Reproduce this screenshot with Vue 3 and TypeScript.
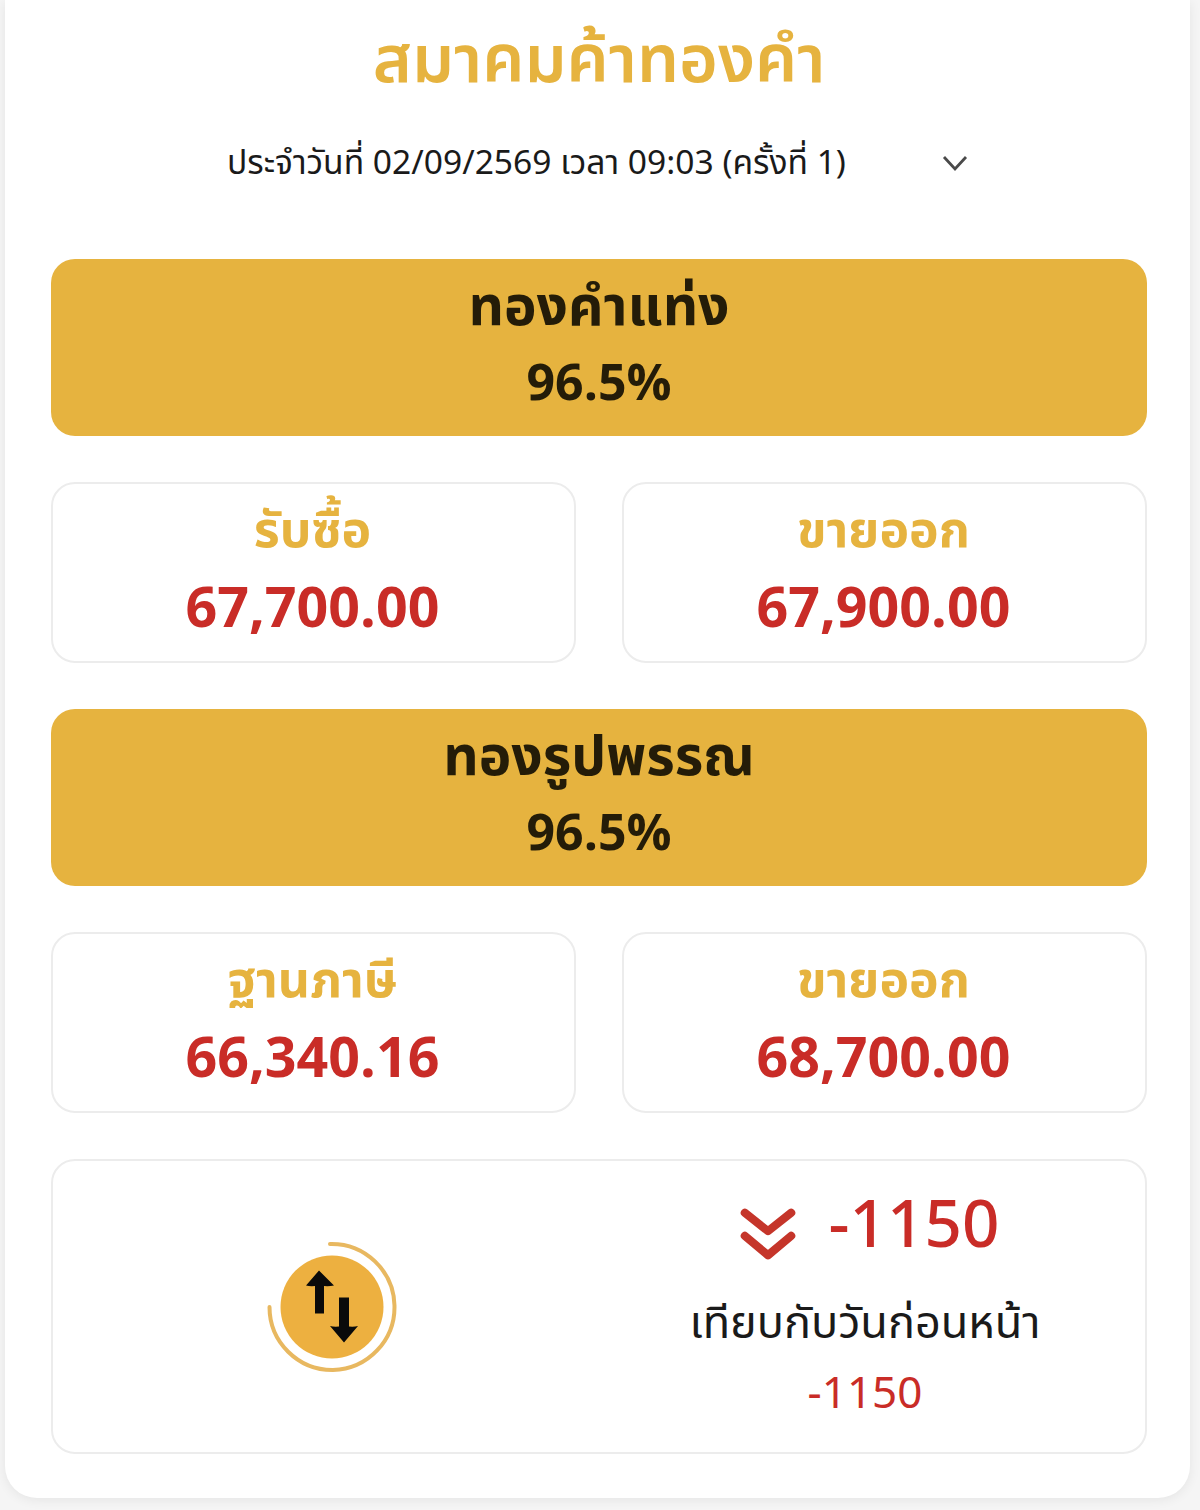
<script setup lang="ts">
interface Price {
  label: string
  value: string
}

interface Section {
  title: string
  purity: string
  prices: Price[]
}

const sections: Section[] = [
  {
    title: 'ทองคำแท่ง',
    purity: '96.5%',
    prices: [
      { label: 'รับซื้อ', value: '67,700.00' },
      { label: 'ขายออก', value: '67,900.00' },
    ],
  },
  {
    title: 'ทองรูปพรรณ',
    purity: '96.5%',
    prices: [
      { label: 'ฐานภาษี', value: '66,340.16' },
      { label: 'ขายออก', value: '68,700.00' },
    ],
  },
]
</script>

<template>
  <div class="page">
    <main class="panel">
      <h1 class="title">สมาคมค้าทองคำ</h1>
      <div class="date-row">
        <span class="date-text">ประจำวันที่ 02/09/2569 เวลา 09:03 (ครั้งที่ 1)</span>
        <svg class="date-chevron" viewBox="0 0 28 18" aria-hidden="true">
          <path d="M3 3 L14 15 L25 3" fill="none" stroke="#4a4a4a" stroke-width="2.8" />
        </svg>
      </div>

      <section v-for="s in sections" :key="s.title" class="section">
        <div class="banner">
          <div class="banner__title">{{ s.title }}</div>
          <div class="banner__purity">{{ s.purity }}</div>
        </div>
        <div class="prices">
          <div v-for="p in s.prices" :key="p.label" class="price">
            <div class="price__label">{{ p.label }}</div>
            <div class="price__value">{{ p.value }}</div>
          </div>
        </div>
      </section>

      <div class="change">
        <div class="change__icon">
          <svg viewBox="0 0 132 132" width="132" height="132" aria-hidden="true">
            <circle cx="66" cy="66" r="51.5" fill="#edb040" />
            <path d="M64 3 A63 63 0 0 1 67 129 A63 63 0 0 1 3.5 66" fill="none" stroke="#e8b860" stroke-width="4" stroke-linecap="round" />
            <path d="M53 29.5 L40 44.5 Q44 45.5 49 45 V72.5 H58 V45 Q63 45.5 68 44.5 Z" fill="#0a0a0a" />
            <path d="M73 56.5 H83 V85.5 Q88 86 92 85 L78 101.5 L64 85 Q68 86 73 85.5 Z" fill="#0a0a0a" />
          </svg>
        </div>
        <div class="change__info">
          <div class="change__main">
            <svg class="change__arrows" viewBox="0 0 58 56" aria-hidden="true">
              <path d="M5 5 L29 24 L53 5" fill="none" stroke="#c5352a" stroke-width="8.5" stroke-linecap="round" stroke-linejoin="round" />
              <path d="M5 29 L29 49 L53 29" fill="none" stroke="#c5352a" stroke-width="8.5" stroke-linecap="round" stroke-linejoin="round" />
            </svg>
            <span class="change__amount">-1150</span>
          </div>
          <div class="change__caption">เทียบกับวันก่อนหน้า</div>
          <div class="change__sub">-1150</div>
        </div>
      </div>
    </main>
  </div>
</template>

<style>
html,
body {
  background: #f5f5f5;
}
</style>

<style scoped>
.page {
  width: 1200px;
  height: 1510px;
  overflow: hidden;
  padding: 0 10px 0 5px;
  box-sizing: border-box;
  font-family: "Noto Sans Thai", "Noto Sans", "DejaVu Sans", sans-serif;
}

.panel {
  height: 1498px;
  box-sizing: border-box;
  background: #fff;
  border-radius: 0 0 32px 32px;
  box-shadow: 0 2px 12px rgba(0, 0, 0, 0.07);
  padding: 0 43px 0 46px;
}

.title {
  margin: 0;
  height: 122px;
  line-height: 124px;
  text-align: center;
  font-size: 66.5px;
  font-weight: 600;
  color: #e6b33f;
  white-space: nowrap;
}

.date-row {
  height: 82px;
  display: flex;
  align-items: center;
  padding-left: 176px;
}

.date-text {
  width: 714px;
  font-size: 33.6px;
  white-space: nowrap;
  color: #1a1a1a;
}

.date-chevron {
  width: 28px;
  height: 18px;
}

.section {
  margin-top: 55px;
}

.section + .section {
  margin-top: 46px;
}

.banner {
  height: 177px;
  box-sizing: border-box;
  background: #e6b33f;
  border-radius: 24px;
  text-align: center;
  color: #241c08;
  font-weight: 700;
  padding-top: 12px;
}

.banner__title {
  font-size: 55px;
  line-height: 76px;
}

.banner__purity {
  font-size: 50px;
  line-height: 76px;
}

.prices {
  display: grid;
  grid-template-columns: 1fr 1fr;
  gap: 46px;
  margin-top: 46px;
}

.price {
  height: 181px;
  box-sizing: border-box;
  border: 2px solid #ececec;
  border-radius: 24px;
  text-align: center;
  padding: 12px 2px 0 0;
}

.price__label {
  font-size: 50px;
  line-height: 72px;
  font-weight: 700;
  color: #e6b33f;
}

.price__value {
  font-size: 55.5px;
  line-height: 84px;
  font-weight: 700;
  color: #c92c27;
}

.change {
  display: grid;
  grid-template-columns: 1fr 1fr;
  height: 295px;
  box-sizing: border-box;
  margin-top: 46px;
  border: 2px solid #ececec;
  border-radius: 24px;
}

.change__icon {
  display: flex;
  align-items: center;
  justify-content: center;
  padding-left: 12px;
}

.change__info {
  display: flex;
  flex-direction: column;
  align-items: center;
  padding-top: 24px;
  padding-right: 14px;
}

.change__main {
  display: flex;
  align-items: center;
  gap: 33px;
  height: 84px;
  margin-left: 9px;
}

.change__arrows {
  width: 56px;
  height: 56px;
  margin-top: 16px;
}

.change__amount {
  font-size: 65.5px;
  font-weight: 500;
  line-height: 84px;
  color: #c92c27;
}

.change__caption {
  font-size: 45px;
  line-height: 72px;
  color: #1a1a1a;
  margin-top: 19px;
}

.change__sub {
  font-size: 44px;
  line-height: 64px;
  color: #c92c27;
  margin-top: 3px;
}
</style>
